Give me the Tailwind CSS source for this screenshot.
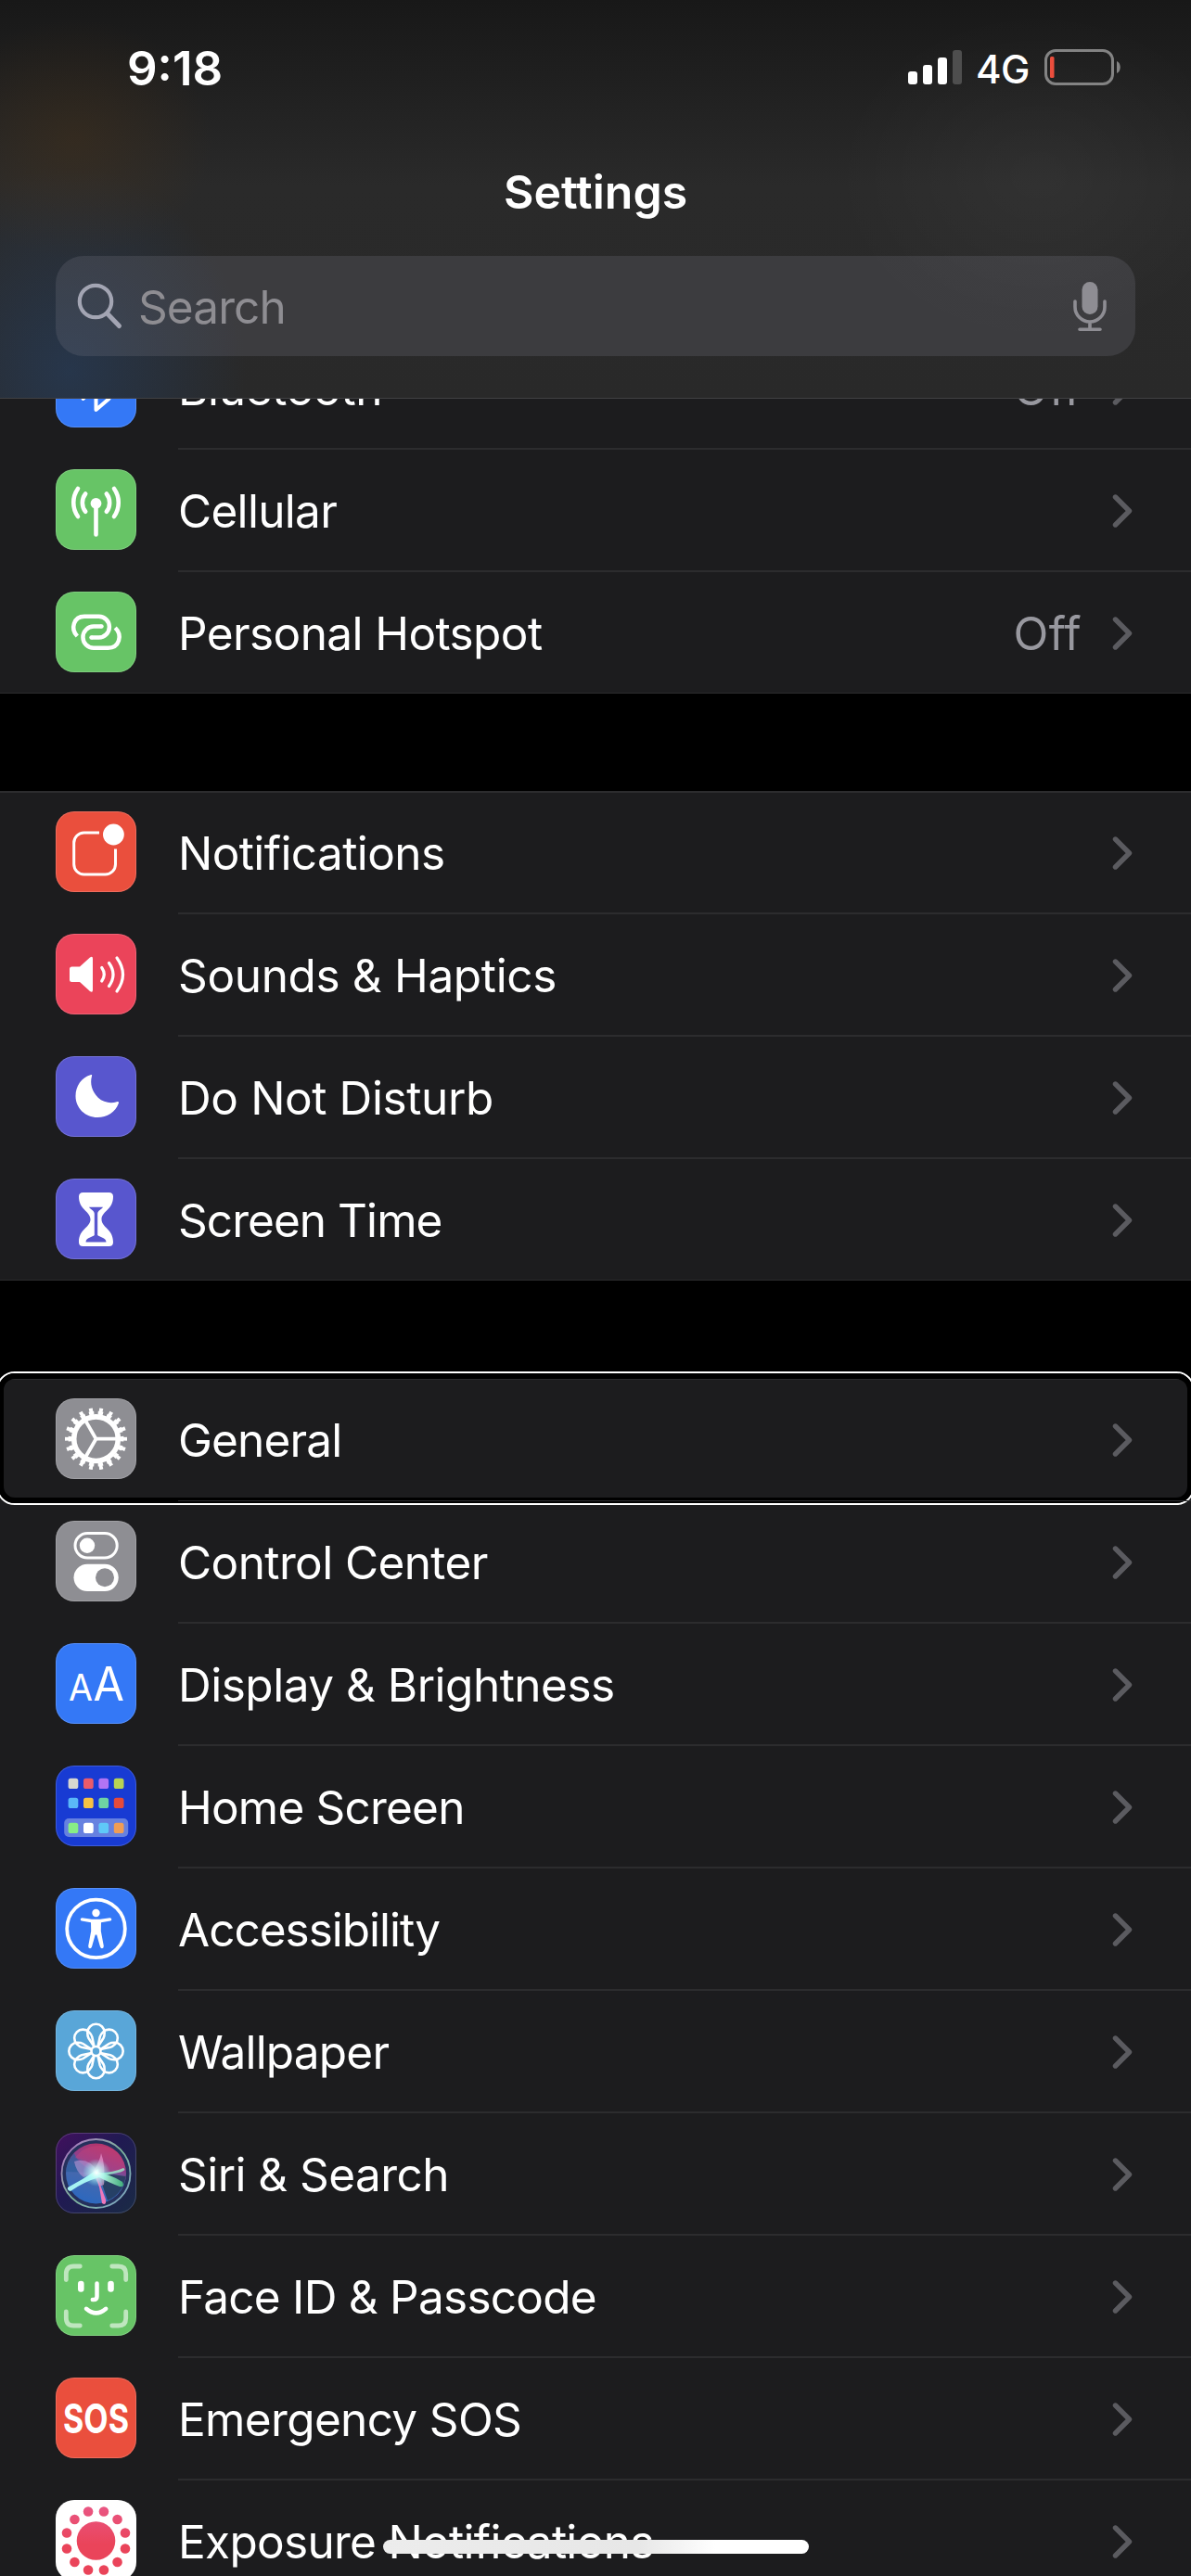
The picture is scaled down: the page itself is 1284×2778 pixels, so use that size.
<!DOCTYPE html>
<html lang="en">

<head>
  <meta charset="UTF-8" />
  <meta name="viewport" content="width=device-width, initial-scale=1.0" />
  <title>Settings</title>
  <script src="https://cdn.jsdelivr.net/npm/@tailwindcss/browser@4"></script>
</head>

<body class="w-[1284px] h-[2778px] relative flex flex-col overflow-hidden bg-black text-white font-['Inter',sans-serif] text-[49.5px] leading-none">
  <header class="relative z-10 shrink-0 h-[430px] flex flex-col border-b border-[#414143] bg-[radial-gradient(ellipse_150px_130px_at_80px_150px,rgba(85,55,20,0.3),transparent),radial-gradient(ellipse_190px_220px_at_75px_400px,rgba(35,75,130,0.38),transparent),radial-gradient(ellipse_220px_180px_at_1120px_190px,rgba(255,255,255,0.035),transparent),linear-gradient(#181818,#1f1f1f_80px,#2a2a2a_200px,#292929)]">
    <!-- status bar -->
    <div class="h-[145px] flex justify-between pl-[137px] pr-[76px]">
      <div class="mt-[48px] text-[51px] font-semibold">9:18</div>
      <div class="mt-[53px] h-[39px] flex items-end">
        <div class="flex items-end gap-[6px] mb-px">
          <div class="w-[10px] h-[14px] rounded-[3px] bg-white"></div>
          <div class="w-[10px] h-[21px] rounded-[3px] bg-white"></div>
          <div class="w-[10px] h-[29px] rounded-[3px] bg-white"></div>
          <div class="w-[10px] h-[37px] rounded-[3px] bg-[#4e4e4e]"></div>
        </div>
        <div class="w-[57px] ml-[15px] mb-[-4px] text-[42px] font-medium tracking-[-0.6px]">4G</div>
        <svg class="w-[83px] h-[39px] ml-[16px]" viewBox="0 0 83 39">
          <rect x="2.5" y="1.5" width="72" height="36" rx="10.5" fill="none" stroke="#838383" stroke-width="3" />
          <rect x="7" y="8" width="4.500" height="23" rx="1.500" fill="#eb4e3d" />
          <path d="M79 13c5 1.500 5 11.500 0 13z" fill="#838383" />
        </svg>
      </div>
    </div>

    <h1 class="mt-[37px] text-center text-[50px] font-semibold">Settings</h1>

    <!-- search field -->
    <div class="mt-[44px] mx-[60px] h-[108px] rounded-[30px] flex items-center pl-[22px] pr-[30px] bg-[rgba(122,120,134,0.24)]">
      <svg class="w-[52px] h-[54px]" viewBox="0 0 52 54" fill="none" stroke="#a3a5b3" stroke-linecap="round">
        <circle cx="21" cy="22" r="17.200" stroke-width="4.200" />
        <path d="M34 35.500L46.500 48.500" stroke-width="5" />
      </svg>
      <div class="ml-[15px] mt-[4px] flex-1 tracking-[-0.9px] text-[#8e8d92]">Search</div>
      <svg class="w-[38px] h-[54px]" viewBox="0 0 38 54" fill="none" stroke="#8e8d93" stroke-width="3.600" stroke-linecap="round">
        <rect x="10.500" y="1" width="17" height="35" rx="8.500" fill="#8e8d93" stroke="none" />
        <path d="M3 22v6a16 16 0 0 0 32 0v-6M19 44v8M8 52.200h22" />
      </svg>
    </div>
  </header>

  <main class="-mt-[78px] flex flex-col gap-[105px]" id="list"></main>

  <!-- home indicator -->
  <div class="absolute left-[413px] bottom-[24px] w-[459px] h-[15px] rounded-full bg-linear-to-r from-[#ececec] from-0% via-[#e7e7e7] via-60% to-white to-78%"></div>

  <script>
    // every glyph is drawn in an 87 x 87 tile
    const icons = {
      bluetooth: `<path d="M29.500 56L57.500 31.500L43.500 18V68L57.500 56L29.500 31.500" fill="none" stroke="#fff" stroke-width="4" stroke-linejoin="round" stroke-linecap="round"/>`,
      cellular: `<g fill="none" stroke="#fff" stroke-width="4.600" stroke-linecap="round">
        <path d="M43.500 38V70.500M32.200 26.500A15.500 15.500 0 0 0 32.200 45.800M54.800 26.500A15.500 15.500 0 0 1 54.800 45.800M24 21A26 26 0 0 0 24 51M63 21A26 26 0 0 1 63 51"/></g>
        <circle cx="43.500" cy="36.800" r="5.900" fill="#fff"/>`,
      hotspot: `<g fill="none" stroke="#fff" stroke-width="4.500">
        <path d="M23.300 48C15.500 40 19.500 26.700 31 26.700H46.500A11.400 11.400 0 0 1 46.500 49.500H38.500" /><path d="M49.500 37.600H41A11.500 11.500 0 0 0 41 60.700H56.500C68.500 60.700 72.500 47 64.200 39"/></g>
        <circle cx="38.500" cy="49.500" r="2.250" fill="#fff"/><circle cx="49.500" cy="37.600" r="2.250" fill="#fff"/>`,
      notifications: `<path d="M47 23H30.500A11 11 0 0 0 19.700 34V57A11 11 0 0 0 30.500 68H53.500A11 11 0 0 0 64.500 57V40.500" fill="none" stroke="#fff" stroke-width="3"/>
        <circle cx="62.400" cy="25" r="11.400" fill="#fff"/>`,
      sounds: `<path d="M17.500 35.500H26L37 25.600Q40 23.500 40 27V60.500Q40 64 37 62L26 52H17.500Q15 52 15 49.500V38Q15 35.500 17.500 35.500Z" fill="#fff"/>
        <path d="M49.700 36.500Q54.800 43.800 49.700 51M57.500 31.500Q66.500 43.800 57.500 56.500M66 26Q79 43.800 66 62" fill="none" stroke="#fff" stroke-width="3.200" stroke-linecap="round"/>`,
      moon: `<path d="M37.500 20.200C28 23 21.500 32 21.500 43C21.500 56 32 66 45 66C55.500 66 64.500 60 67.800 51C68.500 49 67.500 48.500 65.800 49.200C60 51.300 51.500 50.300 45.800 44.800C39 38 36.800 29.500 39 21.600C39.500 20 38.800 19.700 37.500 20.200Z" fill="#fff"/>`,
      hourglass: `<path d="M29.500 15H57.500Q62 15 62 19.500C62 34 49.500 35 49.500 44C49.500 53 62 54 62 68.500Q62 73 57.500 73H29.500Q25 73 25 68.500C25 54 37.500 53 37.500 44C37.500 35 25 34 25 19.500Q25 15 29.500 15Z" fill="#fff"/>
        <path d="M36 30.800H51C49.500 33.500 45.200 34.500 45.200 38V61C47 63 54.500 63.500 54.500 68.500H32.500C32.500 63.500 40 63 41.800 61V38C41.800 34.500 37.500 33.500 36 30.800Z" fill="#5856ce"/>`,
      gear: `<g fill="none" stroke="#fff">
        <circle cx="43.500" cy="43.700" r="23.800" stroke-width="5.600"/>
        <circle cx="43.500" cy="43.700" r="28" stroke-width="4" pathLength="36" stroke-dasharray="1.100 .900" stroke-dashoffset=".550"/>
        <circle cx="43.500" cy="43.700" r="31.500" stroke-width="4" pathLength="36" stroke-dasharray=".720 1.280" stroke-dashoffset=".360"/>
        <path d="M43.500 43.700H67M43.500 43.700L31.800 23.400M43.500 43.700L31.800 64" stroke-width="3.800"/></g>`,
      toggles: `<rect x="21" y="13.500" width="45.200" height="26.500" rx="13.250" fill="none" stroke="#fff" stroke-width="3"/><circle cx="34" cy="26.800" r="8.200" fill="#fff"/>
        <rect x="19.500" y="46.700" width="48.200" height="29.300" rx="14.650" fill="#fff"/><circle cx="53" cy="61.200" r="10" fill="#8e8e93"/>`,
      display: `<g fill="#fff" font-family="Inter, sans-serif"><text x="14" y="62.300" font-size="39" textLength="26" lengthAdjust="spacingAndGlyphs">A</text>
        <text x="40.500" y="62.300" font-size="50" textLength="33.500" lengthAdjust="spacingAndGlyphs">A</text></g>`,
      home: `<rect x="9.200" y="57" width="69" height="20" rx="5" fill="#6681e0"/>` + [
        ["#d8d8d0", "#ea5b6b", "#b274f4", "#b8d354"],
        ["#5ab8f8", "#f7c244", "#6ed3a3", "#e54b3a"],
        ["#88ee86", "#ffffff", "#5fc9f8", "#f09d55"]
      ].map((row, r) => row.map((c, i) => `<rect x="${13.6 + i * 16.4}" y="${[13.8, 34.8, 61.8][r]}" width="10.700" height="11.200" rx="2.600" fill="${c}"/>`).join("")).join(""),
      accessibility: `<circle cx="43.500" cy="43.900" r="31.300" fill="none" stroke="#fff" stroke-width="3.800"/><circle cx="43.500" cy="27" r="4.200" fill="#fff"/>
        <path d="M28.500 32.300L39 33.800H48L58.500 32.300Q60.300 32.500 60.300 34Q60.300 35.300 59 35.600L49 37.300L48.800 46.500L51.800 62.500Q52 65 50 65.200Q48.600 65.200 48 63.500L44.300 50.500H42.700L39 63.500Q38.400 65.200 37 65.200Q35 65 35.200 62.500L38.200 46.500L38 37.300L28 35.600Q26.700 35.300 26.700 34Q26.700 32.500 28.500 32.300Z" fill="#fff"/>`,
      flower: `<g fill="none" stroke="#fff" stroke-width="2.600">` + [0, 45, 90, 135, 180, 225, 270, 315].map(a =>
        `<path transform="translate(43.500 44) rotate(${a})" d="M-1.900 -4.700L-8 -14Q-9.200 -16 -9.200 -20A9.200 9.200 0 0 1 9.200 -20Q9.200 -16 8 -14L1.900 -4.700"/>`).join("") + `<circle cx="43.500" cy="44" r="5"/></g>`,
      siri: `<defs>
          <linearGradient id="sbg" x1="0" y1="0" x2="1" y2="1"><stop offset="0" stop-color="#42105e"/><stop offset=".45" stop-color="#201a52"/><stop offset="1" stop-color="#1a2b45"/></linearGradient>
          <linearGradient id="orb" x1=".65" y1="0" x2=".3" y2="1"><stop offset="0" stop-color="#b83468"/><stop offset=".32" stop-color="#8f3f8c"/><stop offset=".5" stop-color="#4a68aa"/><stop offset="1" stop-color="#2a68c0"/></linearGradient>
          <linearGradient id="rim" x1="0" y1="0" x2="1" y2="1"><stop offset="0" stop-color="#b36bc9"/><stop offset=".5" stop-color="#7fb59b"/><stop offset="1" stop-color="#7fa3c8"/></linearGradient>
          <radialGradient id="glow"><stop offset="0" stop-color="#fff"/><stop offset=".35" stop-color="#c9fff8" stop-opacity=".75"/><stop offset="1" stop-color="#8ff" stop-opacity="0"/></radialGradient>
          <linearGradient id="green" x1="0" x2="1"><stop offset="0" stop-color="#d6fff6"/><stop offset="1" stop-color="#3fae7c"/></linearGradient>
        </defs>
        <rect width="87" height="87" rx="20" fill="url(#sbg)"/>
        <circle cx="43.500" cy="44" r="37" fill="#25305c" stroke="url(#rim)" stroke-width="1.800"/>
        <circle cx="43.500" cy="44" r="32.500" fill="url(#orb)"/>
        <path d="M46 43L75.500 47A32 32 0 0 1 56 73Z" fill="#223a58" opacity=".85"/>
        <path d="M11.500 42A32 32 0 0 1 20 22Q24 34 43 43Z" fill="#2c5c9c" opacity=".7"/>
        <path d="M48 14Q72 16 75 38Q70 43 45 42Q30 28 21 27Q30 14 48 14Z" fill="#d14478" opacity=".35"/>
        <path d="M20 31Q36 26 45 42L30 48Q22 42 20 31Z" fill="#c79ad8" opacity=".55"/>
        <path d="M40 43Q48 30 49 22Q54 35 52 56L47 58Z" fill="#f3a5dc" opacity=".6"/>
        <path d="M44 43Q60 44 73 38Q77 40 70 42.500Q60 45 50 46Z" fill="#9beecb" opacity=".8"/>
        <path d="M43 42Q60 45 72 53Q75 59 69 58Q58 54 43 46Z" fill="url(#green)"/>
        <path d="M43 43Q48 56 54 72Q55 79 50 76Q48 60 43 43Z" fill="#ee78bb"/>
        <path d="M46 39Q30 50 13 59Q12 62 16 63Q30 53 47 48Z" fill="#a6f3f2"/>
        <circle cx="44" cy="43" r="15" fill="url(#glow)"/>`,
      face: `<g fill="none" stroke="#fff" stroke-linecap="round"><path d="M11.300 26.500V20Q11.300 12 19.300 12H26.300M60.700 12H67.700Q75.700 12 75.700 20V26.500M75.700 61V68Q75.700 76 67.700 76H60.700M26.300 76H19.300Q11.300 76 11.300 68V61" stroke-width="4.800" opacity=".58"/>
        <path d="M27.300 31V36.500M59.500 31V36.500" stroke-width="6.600"/><path d="M44.500 30.500V44.500Q44.500 48 41 48H39.800" stroke-width="4.500"/><path d="M33 57.800Q43.600 67 54.200 57.800" stroke-width="4.500"/></g>`,
      sos: `<text x="8" y="60" font-family="Inter, sans-serif" font-weight="700" font-size="44" fill="#fff" textLength="71" lengthAdjust="spacingAndGlyphs">SOS</text>`,
      exposure: `<defs><linearGradient id="exp" x1="0" y1="0" x2="0" y2="87" gradientUnits="userSpaceOnUse"><stop offset="0" stop-color="#e9598a"/><stop offset=".55" stop-color="#ea445a"/></linearGradient></defs>
        <circle cx="43.500" cy="44" r="20.800" fill="url(#exp)"/>
        <g fill="url(#exp)">` + [15, 45, 75, 105, 135, 165, 195, 225, 255, 285, 315, 345].map(a => `<circle cx="${43.5 + 32.6 * Math.sin(a * Math.PI / 180)}" cy="${44 - 32.6 * Math.cos(a * Math.PI / 180)}" r="5.300"/>`).join("") + `</g>`
    };

    // [icon, tile colour, label, letter spacing, value]
    const groups = [
      [
        ["bluetooth", "#3478f6", "Bluetooth", -0.3, "Off"],
        ["cellular", "#67c466", "Cellular", -0.7],
        ["hotspot", "#67c466", "Personal Hotspot", -0.6, "Off"]
      ],
      [
        ["notifications", "#ea4f3d", "Notifications", -0.6],
        ["sounds", "#eb445a", "Sounds &amp; Haptics", -0.35],
        ["moon", "#5856ce", "Do Not Disturb", -0.4],
        ["hourglass", "#5856ce", "Screen Time", -0.95]
      ],
      [
        ["gear", "#8e8e93", "General", -0.85],
        ["toggles", "#8e8e93", "Control Center", -0.6],
        ["display", "#3478f6", "Display &amp; Brightness", -0.5],
        ["home", "#183bd3", "Home Screen", -0.8],
        ["accessibility", "#3478f6", "Accessibility", -1],
        ["flower", "#59a6d8", "Wallpaper", -0.8],
        ["siri", "#1e1a40", "Siri &amp; Search", -0.55],
        ["face", "#67c466", "Face ID &amp; Passcode", -0.75],
        ["sos", "#ea4f3d", "Emergency SOS", -0.65],
        ["exposure", "#ffffff", "Exposure Notifications", -0.7]
      ]
    ];

    const focusRing = `<div class="absolute -left-1 -right-1 -top-[7px] -bottom-[5px] rounded-[20px] border-2 border-white">
        <div class="w-full h-full rounded-[18px] border-[6px] border-black"></div>
      </div>`;

    const row = ([icon, color, label, spacing, value]) => `
      <div class="relative h-[132px] flex items-center pl-[60px]">
        <svg class="w-[87px] h-[87px] -mt-px rounded-[20px] shrink-0 overflow-visible" viewBox="0 0 87 87" style="background:${color}">
          ${icons[icon]}
          <rect x=".5" y=".5" width="86" height="86" rx="19.500" fill="none" stroke="#fff" stroke-opacity=".17"/>
        </svg>
        <div class="ml-[45px] flex-1 h-full flex items-center pr-[62px] border-y border-[#2c2c2e]">
          <div class="mt-[4px] flex-1 whitespace-nowrap" style="letter-spacing:${spacing}px">${label}</div>
          ${value ? `<div class="mt-[4px] mr-[33px] tracking-[0.3px] text-[#98989f]">${value}</div>` : ""}
          <svg class="w-[23px] h-[38px] mt-[2px]" viewBox="0 0 23 38"><path d="M3.500 4L18.500 19L3.500 34" fill="none" stroke="#5b5b60" stroke-width="5.400" stroke-linecap="round" stroke-linejoin="round"/></svg>
        </div>
        ${label === "General" ? focusRing : ""}
      </div>`;

    document.getElementById("list").innerHTML = groups.map(g => `
      <section class="bg-[#1c1c1e] shadow-[inset_0_2px_0_#2c2c2e,inset_0_-1px_0_#2c2c2e]">${g.map(row).join("")}</section>`).join("");
  </script>
</body>

</html>
